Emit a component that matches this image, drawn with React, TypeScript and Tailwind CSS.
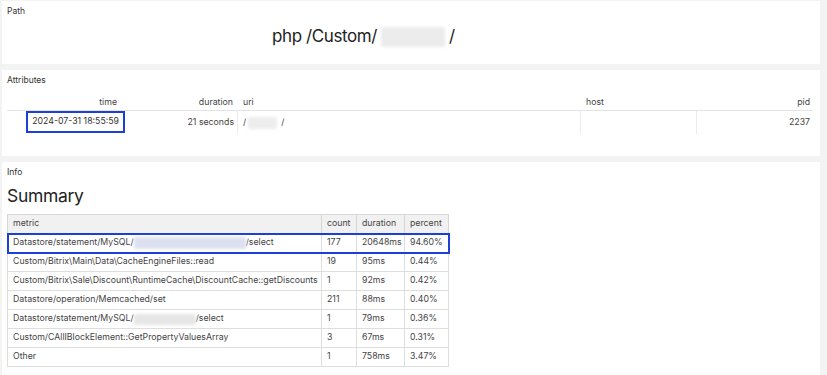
import React from "react";

const Blur = ({ w, h = 12, color = "#e6e6e6" }: { w: number; h?: number; color?: string }) => (
  <span
    className="inline-block align-middle rounded-[2px] blur-[1.5px]"
    style={{ width: w, height: h, background: color }}
  />
);

const rows: { metric: React.ReactNode; count: string; duration: string; percent: string; hl?: boolean }[] = [
  {
    metric: (
      <>
        Datastore/statement/MySQL/
        <Blur w={112} h={12} color="#dde0f0" />
        /select
      </>
    ),
    count: "177",
    duration: "20648ms",
    percent: "94.60%",
    hl: true,
  },
  { metric: "Custom/Bitrix\\Main\\Data\\CacheEngineFiles::read", count: "19", duration: "95ms", percent: "0.44%" },
  {
    metric: "Custom/Bitrix\\Sale\\Discount\\RuntimeCache\\DiscountCache::getDiscounts",
    count: "1",
    duration: "92ms",
    percent: "0.42%",
  },
  { metric: "Datastore/operation/Memcached/set", count: "211", duration: "88ms", percent: "0.40%" },
  {
    metric: (
      <>
        Datastore/statement/MySQL/
        <Blur w={62} h={11} />
        /select
      </>
    ),
    count: "1",
    duration: "79ms",
    percent: "0.36%",
  },
  { metric: "Custom/CAllIBlockElement::GetPropertyValuesArray", count: "3", duration: "67ms", percent: "0.31%" },
  { metric: "Other", count: "1", duration: "758ms", percent: "3.47%" },
];

export default function App() {
  return (
    <div
      className="w-[827px] h-[375px] overflow-hidden bg-[#f3f3f3] pl-[2px] pr-[7px] pt-[1px] flex flex-col gap-[6px] text-[#333]"
      style={{ fontFamily: "Inter, 'Noto Sans', sans-serif" }}
    >
      {/* Path */}
      <div className="bg-white h-[63px] shrink-0 px-[5px] pt-[4px]">
        <div className="text-[8.5px] leading-[12px] text-[#333]">Path</div>
        <div className="pl-[265px] mt-[7px] text-[17px] tracking-[-0.4px] leading-[24px] text-[#222] flex items-center">
          <span>php /Custom/</span>
          <span className="ml-[4px]">
            <Blur w={64} h={20} color="#ececec" />
          </span>
          <span className="ml-[4px]">/</span>
        </div>
      </div>

      {/* Attributes */}
      <div className="bg-white h-[86px] shrink-0 px-[5px] pt-[4px]">
        <div className="text-[8.5px] leading-[12px]">Attributes</div>
        <div className="mt-[10px] w-[805px] text-[8.75px] text-[#444]">
          <div className="flex h-[15px] items-center border-b border-[#e3e3e3]">
            <div className="w-[120px] text-right pr-[10px]">time</div>
            <div className="w-[111px] text-right pr-[5px]">duration</div>
            <div className="w-[343px] pl-[5px]">uri</div>
            <div className="w-[116px] pl-[5px]">host</div>
            <div className="flex-1 text-right pr-[2px]">pid</div>
          </div>
          <div className="flex h-[23px] items-center">
            <div className="w-[120px] h-full flex items-start justify-end pr-[2px]">
              <span className="border-2 border-[#1c3fd6] px-[4px] h-[22px] flex items-center text-[#333]">
                2024-07-31 18:55:59
              </span>
            </div>
            <div className="w-[111px] h-full flex items-center justify-end pr-[3px] border-r border-[#ececec]">
              21 seconds
            </div>
            <div className="w-[343px] h-full flex items-center pl-[5px] border-r border-[#ececec]">
              /
              <span className="ml-[2px] mr-[4px]">
                <Blur w={29} h={12} color="#ededed" />
              </span>
              /
            </div>
            <div className="w-[116px] h-full border-r border-[#ececec]" />
            <div className="flex-1 h-full flex items-center justify-end pr-[2px]">2237</div>
          </div>
        </div>
      </div>

      {/* Info */}
      <div className="bg-white flex-1 px-[5px] pt-[4px]">
        <div className="text-[8.5px] leading-[12px]">Info</div>
        <div className="text-[17.5px] tracking-[-0.3px] leading-[24px] mt-[6px] text-[#222]">Summary</div>
        <table className="mt-[6px] border-collapse table-fixed w-[441px] text-[8.75px] text-[#444]">
          <colgroup>
            <col className="w-[314px]" />
            <col className="w-[35px]" />
            <col className="w-[48px]" />
            <col className="w-[44px]" />
          </colgroup>
          <thead>
            <tr className="bg-[#f1f1f1] h-[19px]">
              <th className="text-left font-normal pl-[5px] border border-[#d6d6d6]">metric</th>
              <th className="text-left font-normal pl-[5px] border border-[#d6d6d6]">count</th>
              <th className="text-left font-normal pl-[5px] border border-[#d6d6d6]">duration</th>
              <th className="text-left font-normal pl-[5px] border border-[#d6d6d6]">percent</th>
            </tr>
          </thead>
          <tbody>
            {rows.map((r, i) => (
              <tr
                key={i}
                className={
                  r.hl
                    ? "h-[19px] outline-2 outline-[#1c3fd6] -outline-offset-1"
                    : "h-[19px]"
                }
              >
                <td className="pl-[5px] border border-[#dedede] whitespace-nowrap overflow-hidden">{r.metric}</td>
                <td className="pl-[5px] border border-[#dedede]">{r.count}</td>
                <td className="pl-[5px] border border-[#dedede] whitespace-nowrap">{r.duration}</td>
                <td className="pl-[5px] border border-[#dedede]">{r.percent}</td>
              </tr>
            ))}
          </tbody>
        </table>
      </div>
    </div>
  );
}
